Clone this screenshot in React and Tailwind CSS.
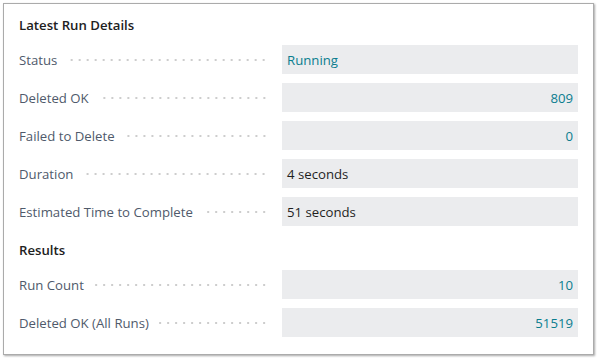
import React from "react"

const rows = [
  { label: "Status", value: "Running", teal: true, right: false },
  { label: "Deleted OK", value: "809", teal: true, right: true },
  { label: "Failed to Delete", value: "0", teal: true, right: true },
  { label: "Duration", value: "4 seconds", teal: false, right: false },
  { label: "Estimated Time to Complete", value: "51 seconds", teal: false, right: false },
]

const results = [
  { label: "Run Count", value: "10", teal: true, right: true },
  { label: "Deleted OK (All Runs)", value: "51519", teal: true, right: true },
]

function Field({ label, value, teal, right }) {
  return (
    <div className="flex items-center h-[29px]">
      <div className="flex-1 flex items-center min-w-0 mr-[14px] pt-[2px]">
        <span className="text-[#4f5a6b] whitespace-nowrap">{label}</span>
        <div className="flex-1 ml-[10px] h-[2px] bg-[radial-gradient(circle,#cdcdcd_0.9px,transparent_1.1px)] bg-[length:8px_2px] bg-right" />
      </div>
      <div
        className={
          "w-[296px] h-full bg-[#ebecee] flex items-center px-[5px] pt-[2px] " +
          (right ? "justify-end " : "") +
          (teal ? "text-[#0a7d8e]" : "text-[#1f1f1f]")
        }
      >
        {value}
      </div>
    </div>
  )
}

export default function App() {
  return (
    <div className="w-[598px] h-[360px] bg-white pt-[3px] pl-[3px] font-['Open_Sans',sans-serif] text-[13.2px]">
      <div className="w-[591px] h-[352px] border border-[#ababab] shadow-[1px_1px_2px_rgba(0,0,0,0.35)] px-[15px] pt-[12px]">
        <div className="h-[20px] flex items-center font-semibold text-[#212121]">Latest Run Details</div>
        <div className="mt-[9px] flex flex-col gap-[9px]">
          {rows.map((r) => (
            <Field key={r.label} {...r} />
          ))}
        </div>
        <div className="mt-[15px] h-[20px] flex items-center font-semibold text-[#212121]">Results</div>
        <div className="mt-[9px] flex flex-col gap-[9px]">
          {results.map((r) => (
            <Field key={r.label} {...r} />
          ))}
        </div>
      </div>
    </div>
  )
}
